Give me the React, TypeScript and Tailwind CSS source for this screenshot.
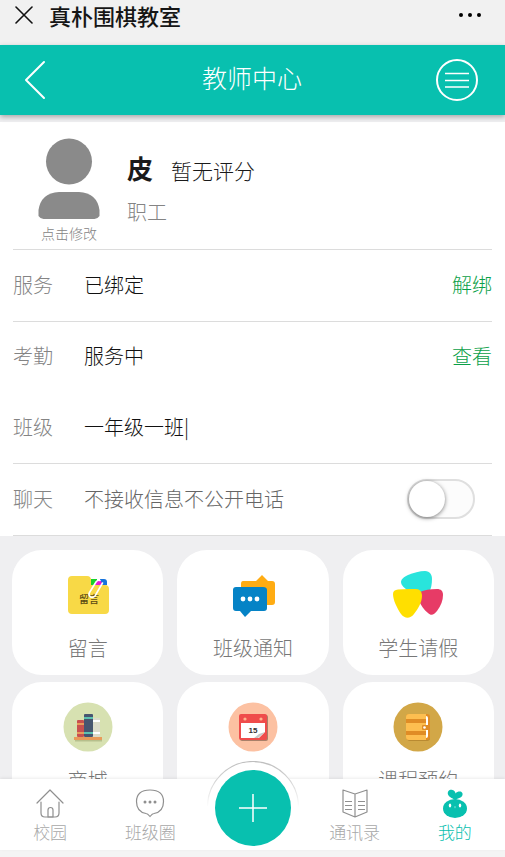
import React, { useState } from 'react';

const MessageIcon = () => (
  <svg viewBox="0 0 50 50" className="w-[50px] h-[50px]">
    <path d="M9 6h15q4 0 4 4v5h14q4 0 4 4v21q0 4-4 4H9q-4 0-4-4V10q0-4 4-4z" fill="#f8d946" />
    <path d="M28 9h6v6h-6z" fill="#16d32a" />
    <path d="M37 9h4q3 0 3 3v3h-7z" fill="#1673dc" />
    <path d="M32 15q0-5 3.500-5t3.500 5z" fill="#e41bd6" />
    <text x="16" y="33" fontSize="10" fontWeight="500" fill="#5b4a14" fontFamily="Noto Sans CJK SC, sans-serif">留言</text>
    <path d="M39.500 13l-7.500 13q-2 2-4.500 1-2.500-2-1-4.500L33 12q2-2.500 4-1.500" fill="none" stroke="#fff" strokeWidth="1.600" strokeLinecap="round" />
  </svg>
);

const NoticeIcon = () => (
  <svg viewBox="0 0 50 50" className="w-[50px] h-[50px]">
    <path d="M15 11h13l6-6 6 6h4q3 0 3 3v18q0 3-3 3H15q-2 0-2-2V14q0-3 2-3z" fill="#ffac13" />
    <path d="M8 17h27q4 0 4 3v18q0 3-3 3H23l-6 6-5-6H8q-3 0-3-3V20q0-3 3-3z" fill="#0583c6" />
    <circle cx="15" cy="29" r="2.400" fill="#fff" />
    <circle cx="22" cy="29" r="2.400" fill="#fff" />
    <circle cx="29" cy="29" r="2.400" fill="#fff" />
  </svg>
);

const LeaveIcon = () => (
  <svg viewBox="0 0 50 50" className="w-[50px] h-[50px]">
    <path d="M8 12c0-3 3-5 7-7C20 3 27 1 32 1c5 0 7 4 7 8 0 5-1 10-3 14l-20-2C12 19 8 15 8 12z" fill="#29e4dc" />
    <path d="M27 22c4-2 10-3 17-3 4 0 6 2 6 6 0 5-2 11-6 16-3 4-6 5-9 2-4-3-7-8-9-12z" fill="#e73b66" />
    <path d="M0 24c0-3 2-4 5-4.500 6-.7 12-.7 18-.5 4 0 6 3 6 7 0 6-4 13-8 18-4 5-9 5-13 0C4 38 0 30 0 24z" fill="#ffdf00" />
  </svg>
);

const ShopIcon = () => (
  <svg viewBox="0 0 50 50" className="w-[50px] h-[50px]">
    <circle cx="25" cy="25" r="24.500" fill="#d7e1b1" />
    <path d="M12 38h27v1.500H12z" fill="#b6bf8c" />
    <rect x="14" y="18" width="7" height="17" rx="1" fill="#c9504f" />
    <path d="M14 21h7v2h-7zM14 30h7v2h-7z" fill="#e79b5c" />
    <rect x="29" y="16" width="8" height="19" rx="1" fill="#dcdccb" />
    <path d="M30 18h7v2h-7zM30 30h7v2h-7z" fill="#fff" />
    <rect x="21" y="12" width="9" height="23" rx="1" fill="#475570" />
    <path d="M21 15h9v2h-9zM21 30h9v2h-9z" fill="#5cc2b0" />
    <path d="M11 35h28v3H11z" fill="#e89b5a" />
  </svg>
);

const CalendarIcon = () => (
  <svg viewBox="0 0 50 50" className="w-[50px] h-[50px]">
    <circle cx="25" cy="25" r="24.500" fill="#fcc1a2" />
    <rect x="12" y="13" width="28" height="26" rx="2" fill="#a98069" />
    <rect x="11" y="12" width="28" height="26" rx="2" fill="#ef4c4b" />
    <path d="M13 21h24v9l-6 6H13z" fill="#fff" />
    <path d="M37 30l-7 6h-4l5-4z" fill="#c6c6c6" />
    <circle cx="17" cy="17" r="1.600" fill="#ffb38d" />
    <circle cx="33" cy="17" r="1.600" fill="#ffb38d" />
    <text x="25" y="31" textAnchor="middle" fontSize="8" fontWeight="700" fill="#333" fontFamily="Liberation Sans, sans-serif">15</text>
  </svg>
);

const BookingIcon = () => (
  <svg viewBox="0 0 50 50" className="w-[50px] h-[50px]">
    <circle cx="25" cy="25" r="24.500" fill="#d2a747" />
    <rect x="14" y="14" width="23" height="25" rx="3" fill="#b98a31" />
    <rect x="13" y="12" width="24" height="26" rx="3" fill="#e08c25" />
    <path d="M31 14h2q2 0 2 2v18q0 2-2 2h-2z" fill="#fff" />
    <path d="M13 16h20v18H13z" fill="#e08c25" />
    <path d="M16 12h17v5H13v-2q0-3 3-3zM13 21h20v8H13zM13 33h20v5H16q-3 0-3-3z" fill="#fdbe50" />
    <rect x="29" y="23" width="8" height="5" rx="1" fill="#e08c25" />
    <circle cx="31.500" cy="25.500" r="1.300" fill="#fff" />
  </svg>
);

const HomeIcon = () => (
  <svg viewBox="0 0 28 30" className="w-7 h-[30px]" fill="none" stroke="#8f8f8f" strokeWidth="1.2" strokeLinecap="round" strokeLinejoin="round">
    <path d="M1 15L14 2l13 13" />
    <path d="M5 14v11q0 4 4 4h10q4 0 4-4V14" />
    <path d="M12 29v-7q0-2.500 2.500-2.500T17 22v7z" />
  </svg>
);

const ChatIcon = () => (
  <svg viewBox="0 0 30 30" className="w-[30px] h-[30px]" fill="none" stroke="#8f8f8f" strokeWidth="1.2" strokeLinejoin="round">
    <path d="M15 2C6 2 1.500 6 1.500 13.500c0 7 4 11 9.500 12 1 0 2 .5 4 3 2-2.500 3-3 4-3 5.500-1 9.500-5 9.500-12C28.500 6 24 2 15 2z" />
    <g fill="#8f8f8f" stroke="none">
      <circle cx="10" cy="14" r="1.500" />
      <circle cx="15" cy="14" r="1.500" />
      <circle cx="20" cy="14" r="1.500" />
    </g>
  </svg>
);

const BookIcon = () => (
  <svg viewBox="0 0 28 30" className="w-7 h-[30px]" fill="none" stroke="#8f8f8f" strokeWidth="1.2" strokeLinejoin="round">
    <path d="M14 6L2 2v22l12 5 12-5V2zM14 6v23" />
    <path d="M4 13.500h7M4 17.500h7M4 21.500h7M17 13.500h7M17 17.500h7M17 21.500h7" />
  </svg>
);

const MineIcon = () => (
  <svg viewBox="0 0 28 30" className="w-7 h-[30px]" fill="#08c0af">
    <path d="M14 12c-1-1-6-2.500-7-5.500C6 3 9 1 11.500 2c2 .5 3 2 3 3.500C16 3.500 19 3 20.500 4c2 1.500 1 4.500-1 5.500-1.500 1-3.500 1-4.500 2.500z" />
    <ellipse cx="14" cy="20.500" rx="12" ry="9.500" />
    <ellipse cx="9" cy="17.500" rx="1.200" ry="1.900" fill="#fff" />
    <ellipse cx="19" cy="17.500" rx="1.200" ry="1.900" fill="#fff" />
    <path d="M13.300 18.500h1.400l-.7 2z" fill="#bff0ea" />
  </svg>
);

const cards = [
  { label: '留言', icon: MessageIcon },
  { label: '班级通知', icon: NoticeIcon },
  { label: '学生请假', icon: LeaveIcon },
  { label: '商城', icon: ShopIcon },
  { label: '', icon: CalendarIcon },
  { label: '课程预约', icon: BookingIcon },
];

const leftTabs = [
  { label: '校园', icon: HomeIcon, active: false },
  { label: '班级圈', icon: ChatIcon, active: false },
];

const rightTabs = [
  { label: '通讯录', icon: BookIcon, active: false },
  { label: '我的', icon: MineIcon, active: true },
];

interface TabProps {
  label: string;
  icon: React.FC;
  active: boolean;
}

const Tab: React.FC<TabProps> = ({ label, icon: Icon, active }) => (
  <a href="#" className={`flex-1 flex flex-col items-center gap-0.5 text-[17px] leading-6 ${active ? 'text-[#08c0af]' : 'text-[#a8a8a8]'}`}>
    <Icon />
    {label}
  </a>
);

interface RowProps {
  label: string;
  value: string;
  action?: string;
  border?: boolean;
}

const Row: React.FC<RowProps> = ({ label, value, action, border = true }) => (
  <div className={`flex items-center pb-0.5 text-xl ${border ? 'h-[72px] border-b border-[#dcdcdc]' : 'h-[70px]'}`}>
    <span className="w-[71px] text-[#848484]">{label}</span>
    <span className="flex-1 text-[#111]">{value}</span>
    {action && <button className="text-[#0a9f48]">{action}</button>}
  </div>
);

const App: React.FC = () => {
  const [chatOn, setChatOn] = useState(false);

  return (
    <div className="h-screen flex flex-col overflow-hidden bg-[#f4f4f4] font-['Noto_Sans_CJK_SC',sans-serif] font-light">
      <div className="shrink-0 flex items-center h-[45px] pb-[15px] px-[15px] bg-[#f1f1f1]">
        <button aria-label="关闭">
          <svg viewBox="0 0 18 18" className="w-[18px] h-[18px]" stroke="#111" strokeWidth="1.6" strokeLinecap="round">
            <path d="M1 1l16 16M17 1L1 17" />
          </svg>
        </button>
        <h1 className="flex-1 ml-4 text-[22px] leading-7 font-medium text-[#161616]">真朴围棋教室</h1>
        <button aria-label="更多" className="mr-2">
          <svg viewBox="0 0 24 6" className="w-6 h-[6px]">
            <circle cx="3" cy="3" r="2" />
            <circle cx="12" cy="3" r="2" />
            <circle cx="21" cy="3" r="2" />
          </svg>
        </button>
      </div>

      <header className="relative shrink-0 flex items-center justify-between h-[70px] pl-6 pr-[27px] bg-[#08c0af] shadow-[0_2px_5px_rgba(0,0,0,0.3)]">
        <button aria-label="返回" className="w-11">
          <svg viewBox="0 0 22 40" className="w-[22px] h-10" fill="none" stroke="#fff" strokeWidth="2" strokeLinecap="round" strokeLinejoin="round">
            <path d="M20 2L2 20l18 18" />
          </svg>
        </button>
        <h2 className="pb-1.5 text-[25px] leading-9 text-white">教师中心</h2>
        <button aria-label="菜单" className="flex items-center justify-center w-[42px] h-[42px] rounded-full border-2 border-white">
          <svg viewBox="0 0 26 16" className="w-[26px] h-4" stroke="#fff" strokeWidth="1.500">
            <path d="M1 1.500h24M1 8.500h24M1 15h24" />
          </svg>
        </button>
      </header>

      <main className="flex-1 min-h-0 overflow-hidden bg-[#efeff1]">
        <div className="mt-[7px] px-[13px] bg-white">
          <section className="flex gap-0.5 h-32 pt-4 border-b border-[#dcdcdc]">
            <button className="flex flex-col items-center w-28 text-sm text-[#848484]">
              <svg viewBox="0 0 62 82" className="w-[62px] h-[82px] shrink-0" fill="#8a8a8a">
                <circle cx="31" cy="23.500" r="23" />
                <path d="M21 54h20q18 1 20.500 18v6q-2 3-5 3h-51q-3 0-5-3v-6Q3 55 21 54z" />
              </svg>
              <span className="leading-[26px]">点击修改</span>
            </button>
            <div className="pt-[10px]">
              <div className="flex items-center gap-[18px] leading-9 text-[#1a1a1a]">
                <h3 className="text-[26px] font-bold">皮</h3>
                <span className="pt-1 text-[21px]">暂无评分</span>
              </div>
              <p className="pt-[10px] text-xl text-[#848484]">职工</p>
            </div>
          </section>

          <Row label="服务" value="已绑定" action="解绑" />
          <Row label="考勤" value="服务中" action="查看" border={false} />
          <Row label="班级" value="一年级一班|" />
          <div className="flex items-center h-[72px] pb-0.5 border-b border-[#dcdcdc] text-xl">
            <span className="w-[71px] text-[#848484]">聊天</span>
            <label htmlFor="chat" className="flex-1 text-[#666]">不接收信息不公开电话</label>
            <input
              id="chat"
              type="checkbox"
              checked={chatOn}
              onChange={(e) => setChatOn(e.target.checked)}
              className="appearance-none w-[68px] h-10 mr-[17px] rounded-full border-2 border-[#dfdfdf] bg-[#fcfcfc] checked:bg-[#08c0af] before:block before:w-9 before:h-9 before:rounded-full before:bg-white before:shadow-[0_1px_4px_rgba(0,0,0,0.5)] checked:before:ml-7"
            />
          </div>
        </div>

        <div className="grid grid-cols-3 gap-x-[14px] gap-y-[7px] pl-3 pr-[11px] pt-[14px]">
          {cards.map(({ label, icon: Icon }, index) => (
            <button key={index} className="flex flex-col items-center h-[125px] pt-5 rounded-[30px] bg-white text-xl text-[#777]">
              <Icon />
              <span className="mt-[14px]">{label}</span>
            </button>
          ))}
        </div>
      </main>

      <nav className="relative shrink-0 flex h-[71px] pt-[9px] mb-[7px] bg-white shadow-[0_-1px_3px_rgba(0,0,0,0.08)]">
        {leftTabs.map((tab) => (
          <Tab key={tab.label} {...tab} />
        ))}
        <div className="w-[104px]" />
        {rightTabs.map((tab) => (
          <Tab key={tab.label} {...tab} />
        ))}
        {/* raised publish button with its fading rim */}
        <div className="absolute left-1/2 -top-[18px] -translate-x-1/2 flex flex-col items-center">
          <svg viewBox="0 0 92 46" className="w-[92px] h-[46px]">
            <defs>
              <linearGradient id="rim" x1="0" y1="0" x2="0" y2="46" gradientUnits="userSpaceOnUse">
                <stop offset="0" stopColor="#bdbdbd" />
                <stop offset="0.4" stopColor="#d2d2d2" />
                <stop offset="1" stopColor="#fff" />
              </linearGradient>
            </defs>
            <path d="M.5 46a45.500 45.500 0 0 1 91 0" fill="#fff" stroke="url(#rim)" strokeWidth="1.200" />
          </svg>
          <button aria-label="发布" className="flex items-center justify-center w-[76px] h-[76px] -mt-[37px] rounded-full bg-[#08c0af]">
            <svg viewBox="0 0 30 30" className="w-[30px] h-[30px]" stroke="#fff" strokeWidth="1.500">
              <path d="M15 1v28M1 15h28" />
            </svg>
          </button>
        </div>
      </nav>
    </div>
  );
};

export default App;
